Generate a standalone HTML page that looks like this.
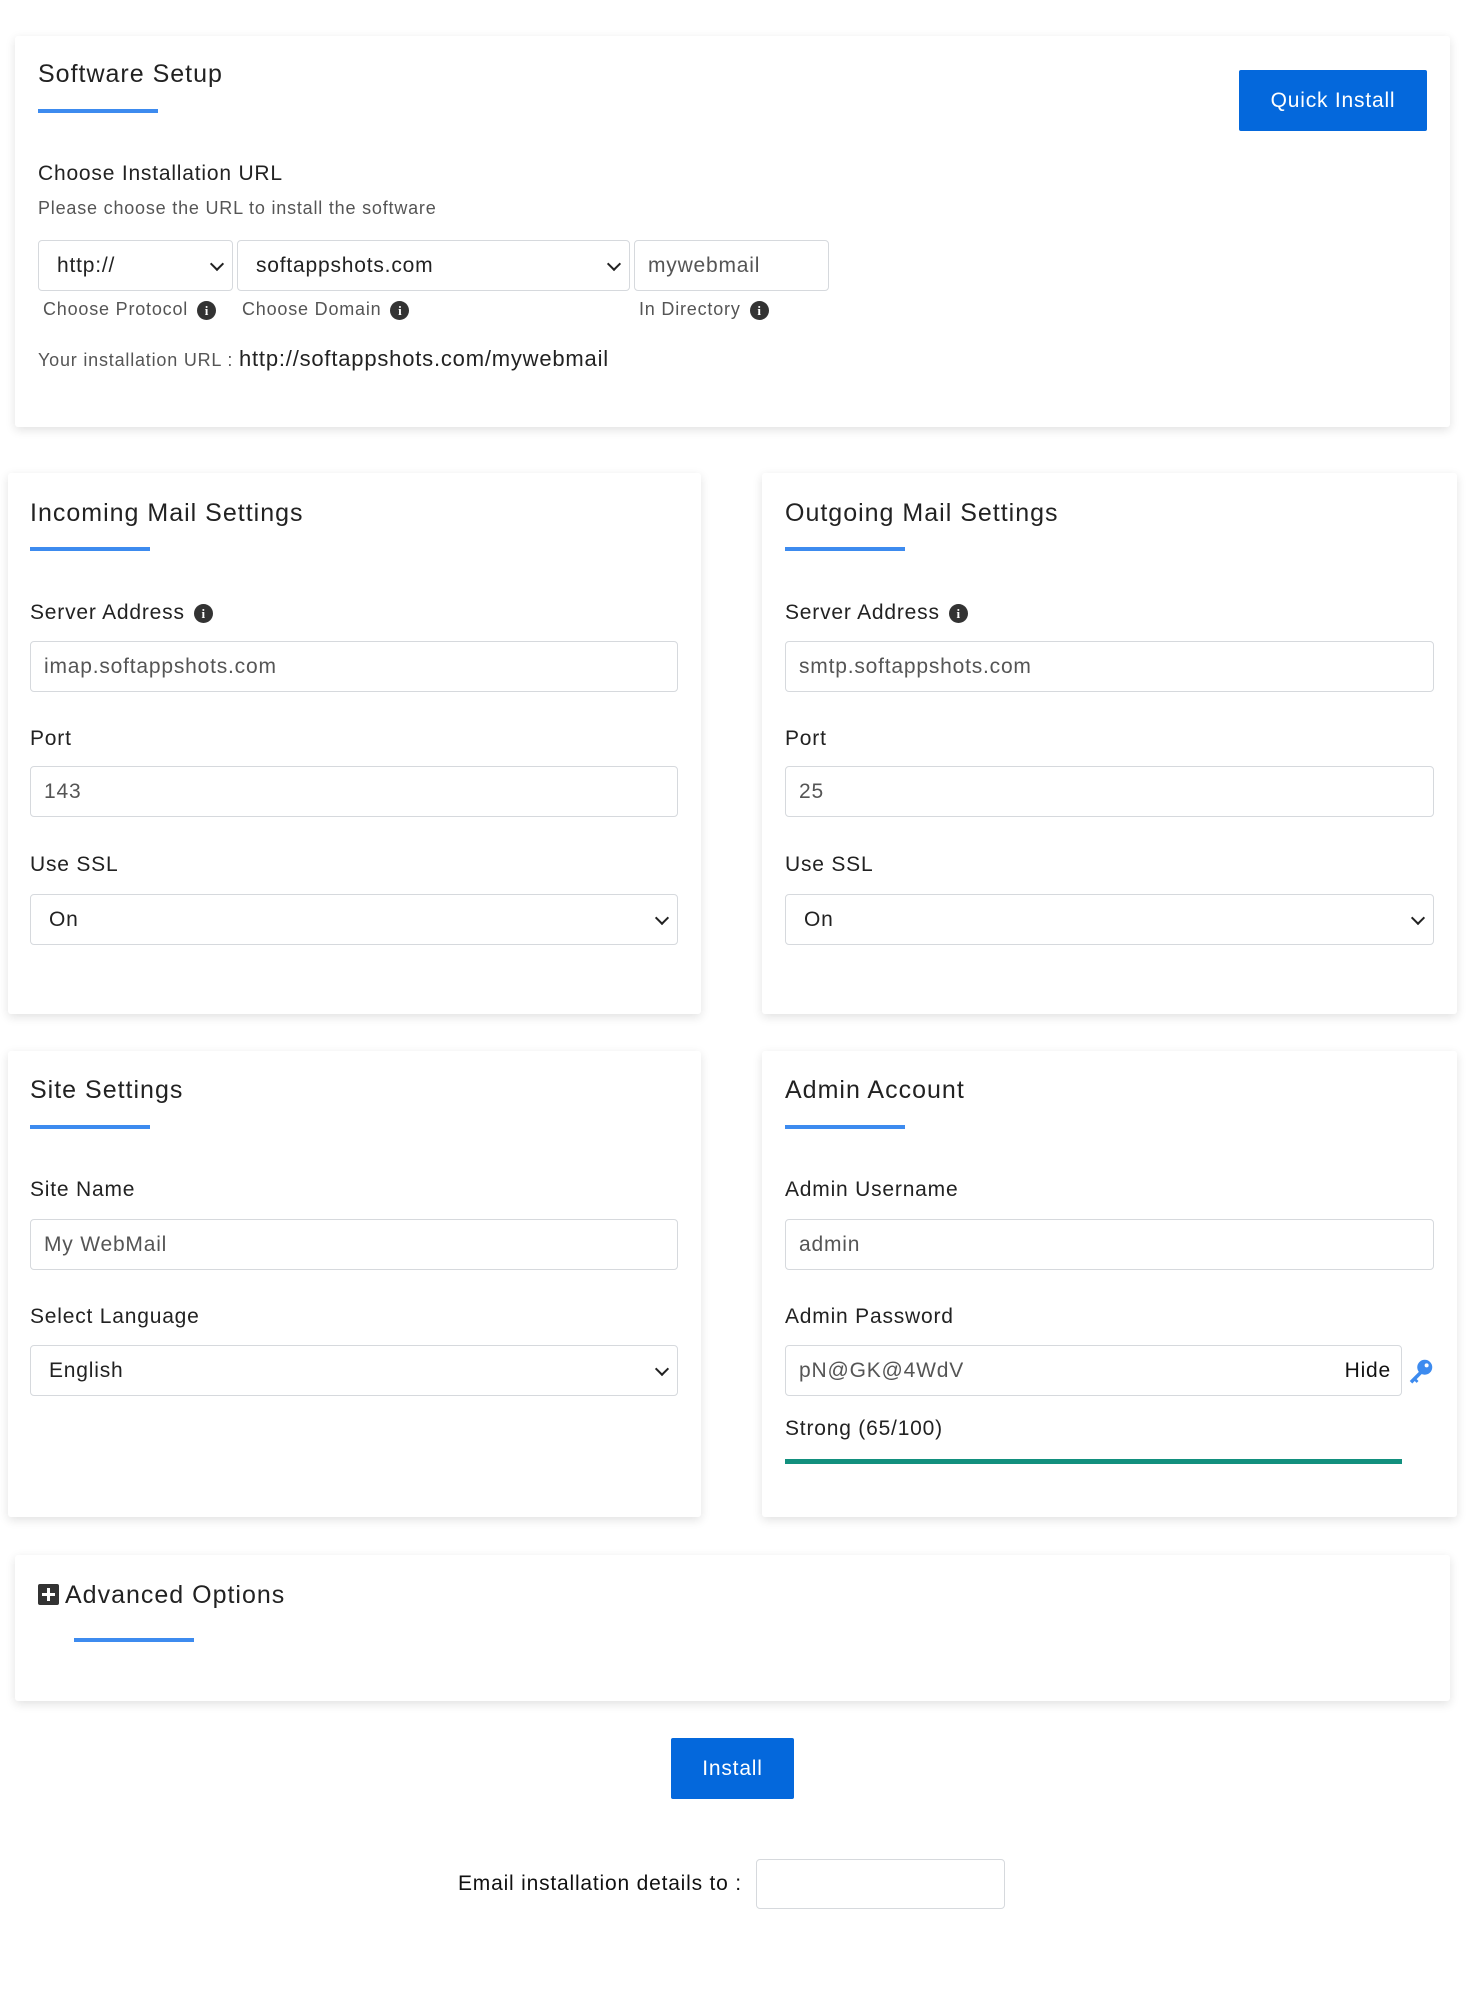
<!DOCTYPE html>
<html><head><style>
*{box-sizing:border-box;margin:0;padding:0}
body{width:1466px;height:2000px;background:#fff;font-family:"Liberation Sans",sans-serif;color:#222;position:relative;overflow:hidden;letter-spacing:0.8px}
.a{position:absolute}
.card{position:absolute;background:#fff;box-shadow:0 3px 10px rgba(0,0,0,.12);border-radius:3px}
.t{position:absolute;font-size:25px;color:#222;line-height:1;letter-spacing:1px}
.ul{position:absolute;height:4px;width:120px;background:#3d8bef}
.lb{position:absolute;font-size:21px;color:#222;line-height:1}
.in{position:absolute;border:1px solid #d6d9dd;border-radius:4px;font-size:21px;color:#555;padding-left:13px;display:flex;align-items:center;background:#fff}
.sel{color:#222;padding-left:18px}
.chev{position:absolute;right:10px;top:50%;width:10px;height:10px;border-right:2.5px solid #222;border-bottom:2.5px solid #222;transform:translateY(-70%) rotate(45deg)}
.info{display:inline-block;width:19px;height:19px;border-radius:50%;background:#333;color:#fff;font-size:13px;font-weight:bold;text-align:center;line-height:19px;vertical-align:middle;margin-left:9px;font-family:"Liberation Serif",serif;letter-spacing:0}
.btn{position:absolute;background:#0468dc;color:#fff;font-size:21px;display:flex;align-items:center;justify-content:center;border-radius:2px}
.sm{position:absolute;font-size:18px;color:#555;line-height:1}
</style></head><body>
<div class="card" style="left:15px;top:36px;width:1435px;height:391px"></div>
<div class="t" style="left:38px;top:62px">Software Setup</div>
<div class="ul" style="left:38px;top:109px"></div>
<div class="btn" style="left:1239px;top:70px;width:188px;height:61px">Quick Install</div>
<div class="lb" style="left:38px;top:163px">Choose Installation URL</div>
<div class="sm" style="left:38px;top:199px">Please choose the URL to install the software</div>
<div class="in sel" style="left:38px;top:240px;width:195px;height:51px">http://<span class="chev"></span></div>
<div class="in sel" style="left:237px;top:240px;width:393px;height:51px">softappshots.com<span class="chev"></span></div>
<div class="in" style="left:634px;top:240px;width:195px;height:51px">mywebmail</div>
<div class="sm" style="left:43px;top:300px">Choose Protocol<span class="info">i</span></div>
<div class="sm" style="left:242px;top:300px">Choose Domain<span class="info">i</span></div>
<div class="sm" style="left:639px;top:300px">In Directory<span class="info">i</span></div>
<div class="sm" style="left:38px;top:348px">Your installation URL : <span style="font-size:22px;color:#222">http://softappshots.com/mywebmail</span></div>

<div class="card" style="left:8px;top:473px;width:693px;height:541px"></div>
<div class="card" style="left:762px;top:473px;width:695px;height:541px"></div>
<div class="t" style="left:30px;top:501px">Incoming Mail Settings</div>
<div class="ul" style="left:30px;top:547px"></div>
<div class="lb" style="left:30px;top:602px">Server Address<span class="info">i</span></div>
<div class="in" style="left:30px;top:641px;width:648px;height:51px">imap.softappshots.com</div>
<div class="lb" style="left:30px;top:728px">Port</div>
<div class="in" style="left:30px;top:766px;width:648px;height:51px">143</div>
<div class="lb" style="left:30px;top:854px">Use SSL</div>
<div class="in sel" style="left:30px;top:894px;width:648px;height:51px">On<span class="chev"></span></div>

<div class="t" style="left:785px;top:501px">Outgoing Mail Settings</div>
<div class="ul" style="left:785px;top:547px"></div>
<div class="lb" style="left:785px;top:602px">Server Address<span class="info">i</span></div>
<div class="in" style="left:785px;top:641px;width:649px;height:51px">smtp.softappshots.com</div>
<div class="lb" style="left:785px;top:728px">Port</div>
<div class="in" style="left:785px;top:766px;width:649px;height:51px">25</div>
<div class="lb" style="left:785px;top:854px">Use SSL</div>
<div class="in sel" style="left:785px;top:894px;width:649px;height:51px">On<span class="chev"></span></div>

<div class="card" style="left:8px;top:1051px;width:693px;height:466px"></div>
<div class="card" style="left:762px;top:1051px;width:695px;height:466px"></div>
<div class="t" style="left:30px;top:1078px">Site Settings</div>
<div class="ul" style="left:30px;top:1125px"></div>
<div class="lb" style="left:30px;top:1179px">Site Name</div>
<div class="in" style="left:30px;top:1219px;width:648px;height:51px">My WebMail</div>
<div class="lb" style="left:30px;top:1306px">Select Language</div>
<div class="in sel" style="left:30px;top:1345px;width:648px;height:51px">English<span class="chev"></span></div>

<div class="t" style="left:785px;top:1078px">Admin Account</div>
<div class="ul" style="left:785px;top:1125px"></div>
<div class="lb" style="left:785px;top:1179px">Admin Username</div>
<div class="in" style="left:785px;top:1219px;width:649px;height:51px">admin</div>
<div class="lb" style="left:785px;top:1306px">Admin Password</div>
<div class="in" style="left:785px;top:1345px;width:617px;height:51px">pN@GK@4WdV<span style="position:absolute;right:10px;color:#111">Hide</span></div>
<svg class="a" style="left:1406px;top:1356px" width="30" height="30" viewBox="0 0 24 24"><circle cx="15" cy="9" r="6" fill="#3d8bef"/><circle cx="16.5" cy="7.5" r="1.6" fill="#fff"/><path d="M11 12 L3 20 L5 22 L7 20 L8.5 21.5 L10 20 L8.5 18.5 L13 14Z" fill="#3d8bef"/></svg>
<div class="lb" style="left:785px;top:1418px">Strong (65/100)</div>
<div class="a" style="left:785px;top:1459px;width:617px;height:5px;background:#12907e"></div>

<div class="card" style="left:15px;top:1555px;width:1435px;height:146px"></div>
<div class="a" style="left:38px;top:1584px;width:21px;height:21px;background:#333;border-radius:2px"><div class="a" style="left:4px;top:9px;width:13px;height:3px;background:#fff"></div><div class="a" style="left:9px;top:4px;width:3px;height:13px;background:#fff"></div></div>
<div class="t" style="left:65px;top:1583px">Advanced Options</div>
<div class="ul" style="left:74px;top:1638px"></div>

<div class="btn" style="left:671px;top:1738px;width:123px;height:61px">Install</div>
<div class="lb" style="left:458px;top:1873px;color:#111">Email installation details to :</div>
<div class="in" style="left:756px;top:1859px;width:249px;height:50px"></div>
</body></html>
